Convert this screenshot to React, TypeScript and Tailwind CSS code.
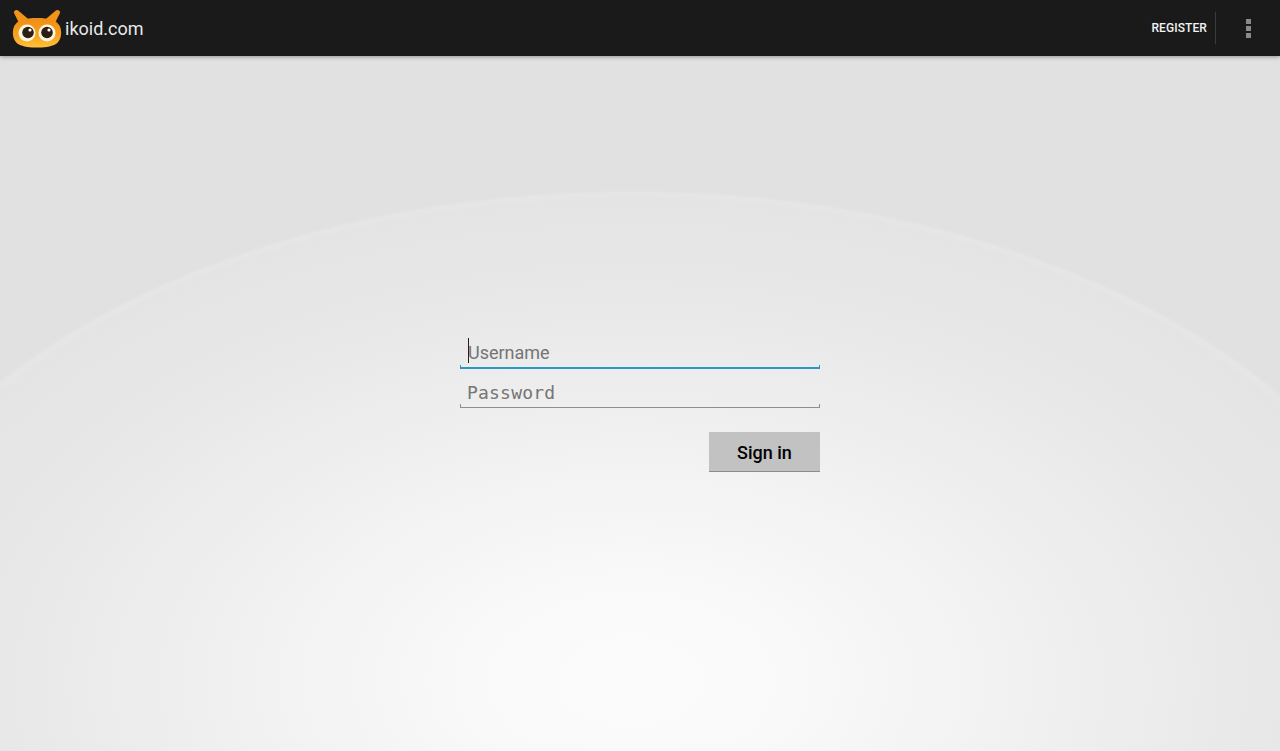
const roboto = "font-['Roboto',sans-serif]";

function OwlLogo() {
  return (
    <svg width="50" height="40" viewBox="0 0 50 40" className="block">
      <defs>
        <linearGradient id="owlBody" x1="0" y1="0" x2="0" y2="1">
          <stop offset="0" stopColor="#ef8e14" />
          <stop offset="0.55" stopColor="#f7a01c" />
          <stop offset="1" stopColor="#ffc23a" />
        </linearGradient>
      </defs>
      <path d="M4.500 4.500L14 12.500L9 13.500Z" fill="#f3931a" stroke="#f3931a" strokeWidth="5" strokeLinejoin="round" />
      <path d="M45.500 4.500L36 12.500L41 13.500Z" fill="#f3931a" stroke="#f3931a" strokeWidth="5" strokeLinejoin="round" />
      <path
        d="M25 10C37 10 46 12 48.500 20C50 26 49 32 44 36C39 39 31 39.500 25 39.500C19 39.500 11 39 6 36C1 32 0 26 1.500 20C4 12 13 10 25 10Z"
        fill="url(#owlBody)"
      />
      <circle cx="15" cy="25" r="8.500" fill="#fff6e0" />
      <circle cx="35" cy="25" r="8.500" fill="#fff6e0" />
      <circle cx="16" cy="24.500" r="5.800" fill="#2e1d14" />
      <circle cx="35" cy="24.500" r="5.800" fill="#2e1d14" />
      <circle cx="18" cy="22" r="1.600" fill="#ffffff" />
      <circle cx="37" cy="22" r="1.600" fill="#ffffff" />
    </svg>
  );
}

function Field({
  placeholder,
  focused,
  mono,
}: {
  placeholder: string;
  focused?: boolean;
  mono?: boolean;
}) {
  const line = focused ? "bg-[#2a97c4]" : "bg-[#8f8f8f]";
  return (
    <div className={`relative ${focused ? "h-10" : "h-[39px]"}`}>
      <input
        readOnly
        placeholder={placeholder}
        className={`block h-full w-full bg-transparent pt-[7px] text-[18px] outline-none placeholder:text-[#757575] ${
          mono ? "pl-[7px] tracking-[0.2px] font-['DejaVu_Sans_Mono',monospace]" : `pl-2 ${roboto}`
        }`}
      />
      {focused && (
        <span className="absolute left-2 top-[9px] h-[25px] w-px bg-[#222222]" />
      )}
      <span className={`absolute inset-x-0 bottom-0 ${focused ? "h-[2px]" : "h-px"} ${line}`} />
      <span className={`absolute bottom-0 left-0 h-1 w-px ${line}`} />
      <span className={`absolute bottom-0 right-0 h-1 w-px ${line}`} />
    </div>
  );
}

export default function App() {
  return (
    <div className="flex h-[751px] w-[1280px] flex-col overflow-hidden bg-[#e0e0e0]">
      <header className="z-10 flex h-14 shrink-0 items-center justify-between bg-[#1a1a1a] shadow-[0_1px_4px_rgba(0,0,0,0.35)]">
        <div className="flex items-center pl-[12px]">
          <OwlLogo />
          <span className={`ml-[3px] text-[18px] text-[#e8e8e8] ${roboto}`}>ikoid.com</span>
        </div>
        <div className="flex h-full items-center">
          <button className={`text-[12px] font-medium tracking-[0.1px] text-[#f2f2f2] ${roboto}`}>
            REGISTER
          </button>
          <div className="ml-2 h-8 w-px bg-[#3c3c3c]" />
          <div className="flex w-[64px] flex-col items-center gap-[2px]">
            <span className="size-[5px] bg-[#8a8a8a]" />
            <span className="size-[5px] bg-[#8a8a8a]" />
            <span className="size-[5px] bg-[#8a8a8a]" />
          </div>
        </div>
      </header>
      <main className="flex flex-1 justify-center bg-[radial-gradient(ellipse_800px_490px_at_632px_624px,#fbfbfb_0%,#f9f9f9_20%,#f4f4f4_38%,#efefef_55%,#e9e9e9_75%,#e4e4e4_98%,#e6e6e6_99.300%,#e1e1e1_100%)] pt-[273px]">
        <form className="w-[360px]">
          <Field placeholder="Username" focused />
          <Field placeholder="Password" mono />
          <div className="mt-6 flex justify-end">
            <button
              type="button"
              className={`h-10 w-[111px] border-b border-b-[#8c8c8c] bg-[#c2c2c2] pt-[2px] text-[18px] font-medium text-black ${roboto}`}
            >
              Sign in
            </button>
          </div>
        </form>
      </main>
    </div>
  );
}
